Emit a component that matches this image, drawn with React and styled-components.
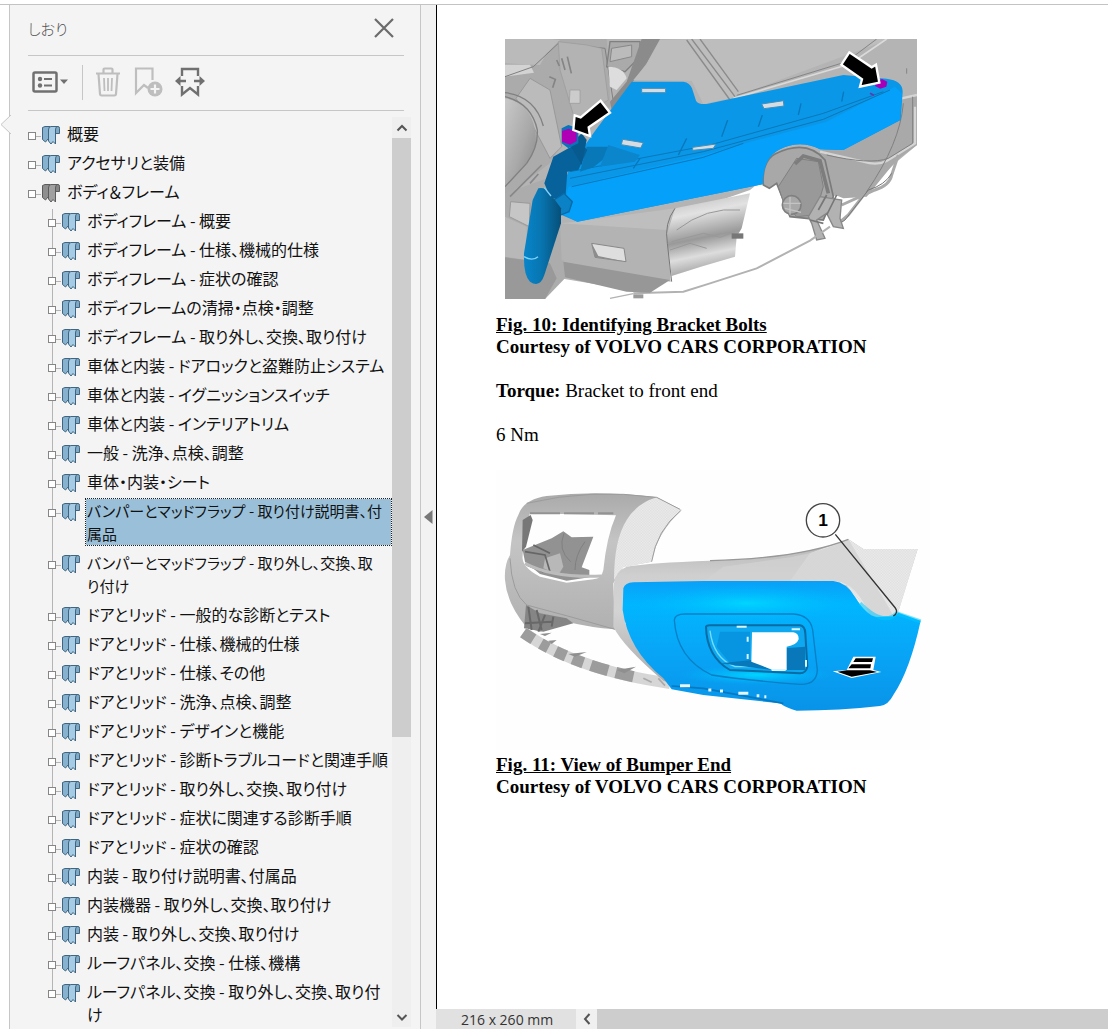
import React from "react";
import styled, { createGlobalStyle, css } from "styled-components";

const GlobalStyle = createGlobalStyle`
  * { box-sizing: border-box; }
  body { margin: 0; background: #fff; }
  button { border: 0; padding: 0; background: none; font: inherit; color: inherit; cursor: pointer; }
  ul { list-style: none; margin: 0; padding: 0; }
`;

const uiFont = css`
  font-family: "Noto Sans CJK JP", "Noto Sans", sans-serif;
  font-feature-settings: "palt";
`;

const Shell = styled.div`
  display: flex;
  flex-direction: column;
  height: 100vh;
  overflow: hidden;
`;
const TopEdge = styled.div`
  flex: none;
  height: 5px;
  border-bottom: 1px solid #c3c3c3;
`;
const Workspace = styled.div`
  display: flex;
  flex: 1;
  min-height: 0;
`;
const Rail = styled.div`
  flex: none;
  width: 10px;
  padding-top: 110px;
  svg { display: block; position: relative; z-index: 1; }
`;
const Panel = styled.aside`
  ${uiFont}
  flex: none;
  width: 412px;
  display: flex;
  flex-direction: column;
  background: #f4f4f4;
  border-left: 1px solid #c6c6c6;
  border-right: 1px solid #c6c6c6;
  margin-left: -1px;
`;
const PanelHeader = styled.header`
  display: flex;
  flex: none;
  align-items: center;
  justify-content: space-between;
  height: 51px;
  margin: 0 16px 0 18px;
  padding: 0 9px 4px 0;
  border-bottom: 1px solid #c6c6c6;
`;
const PanelTitle = styled.h1`
  margin: 0;
  font-size: 15px;
  font-weight: 300;
  color: #555;
`;
const IconButton = styled.button`
  display: flex;
  flex: none;
`;
const Toolbar = styled.div`
  display: flex;
  flex: none;
  align-items: center;
  gap: 12px;
  height: 55px;
  margin: 0 16px 0 18px;
  padding: 0 0 2px 4px;
  border-bottom: 1px solid #c6c6c6;
`;
const Divider = styled.span`
  width: 1px;
  height: 35px;
  margin-left: 2px;
  background: #c6c6c6;
`;
const TreeArea = styled.div`
  display: flex;
  flex: 1;
  min-height: 0;
  padding: 6px 9px 2px 18px;
`;
const Tree = styled.nav`
  flex: 1;
  min-width: 0;
  padding-top: 5px;
  overflow: hidden;
`;
const Branch = styled.ul`
  padding-left: 20px;
`;
const Row = styled.div`
  display: flex;
  padding-right: 1px;
`;
const Guide = styled.span`
  flex: none;
  width: 13px;
  padding-top: 10px;
  background-image: ${(p) => (p.$line ? "linear-gradient(#b4b4b4, #b4b4b4)" : "none")};
  background-repeat: no-repeat;
  background-position: 4px 0;
  background-size: 1px ${(p) => (p.$last ? "12px" : "100%")};
`;
const Expander = styled.button`
  display: block;
  width: 8px;
  height: 8px;
  border: 1px solid #868686;
  background: #fff;
`;
const Twig = styled.span`
  display: flex;
  align-items: center;
  &::after {
    content: "";
    width: 5px;
    height: 1px;
    background: #b4b4b4;
  }
`;
const Ribbon = styled.span`
  flex: none;
  width: 25px;
  padding-top: 3px;
  svg { display: block; }
`;
const Label = styled.a`
  flex: ${(p) => (p.$long ? "1" : "0 1 auto")};
  min-width: 0;
  margin-bottom: 6px;
  padding-left: 1px;
  font-size: ${(p) => (p.$long ? "15px" : "16px")};
  line-height: 23px;
  color: #111;
  text-decoration: none;
  white-space: pre-line;
  word-break: break-all;
  ${(p) => p.$selected && css`
    background: #9ac0d9;
    outline: 1px dotted #222;
  `}
`;
const VScroll = styled.div`
  display: flex;
  flex: none;
  flex-direction: column;
  width: 19px;
  background: #efefef;
`;
const ScrollButton = styled.button`
  display: flex;
  flex: none;
  align-items: center;
  justify-content: center;
  width: 20px;
  height: 21px;
`;
const VTrack = styled.div`
  flex: 1;
`;
const VThumb = styled.div`
  height: 69%;
  background: #cdcdcd;
`;
const Splitter = styled.div`
  display: flex;
  flex: none;
  align-items: center;
  justify-content: center;
  width: 15px;
  background: #f2f2f2;
`;
const Viewer = styled.main`
  display: flex;
  flex: 1;
  flex-direction: column;
  min-width: 0;
`;
const Page = styled.article`
  flex: 1;
  min-height: 0;
  padding: 34px 0 0 59px;
  overflow: hidden;
  border-left: 1px solid #000;
  background: #fff;
  font-family: "Liberation Serif", serif;
  font-size: 19px;
  line-height: 22px;
  color: #000;
`;
const Figure = styled.figure`
  margin: 0 0 22px;
  svg { display: block; }
`;
const FigureArt = styled.div`
  padding: ${(p) => p.$pad};
`;
const Caption = styled.figcaption`
  font-weight: 700;
`;
const CaptionTitle = styled.div`
  text-decoration: underline;
`;
const Para = styled.p`
  margin: 0 0 22px;
`;
const StatusBar = styled.footer`
  display: flex;
  flex: none;
  height: 20px;
  background: #cdcdcd;
`;
const PageSize = styled.div`
  width: 140px;
  padding-left: 25px;
  background: #e1e1e1;
  font: 14px/22px "Open Sans", sans-serif;
  color: #333;
`;
const HBack = styled(ScrollButton)`
  width: 21px;
  height: 20px;
  background: #f0f0f0;
`;

const Chevron = ({ d }) => (
  <svg width="12" height="12" viewBox="0 0 12 12" fill="none" stroke="#555" strokeWidth="2">
    <path d={d} />
  </svg>
);

const BookmarkIcon = ({ gray }) => {
  const [light, mid, dark, edge] = gray
    ? ["#a0a0a0", "#8f8f8f", "#858585", "#5c5c5c"]
    : ["#a6cbe5", "#86b1cf", "#7fa9c5", "#3f6580"];
  return (
    <svg width="20" height="20" viewBox="0 0 20 20" strokeLinejoin="round">
      <path d="M13 1.500h4q1.500 0 1.500 1.800v5.200H14z" fill={dark} stroke={edge} />
      <path d="M1.500 2.500L4 1.500h5v15l-2-2.500-2.500 3-3-2.500z" fill={mid} stroke={edge} />
      <path d="M7.500 5q0-3.500 2.500-3.500h6Q14.500 2.500 14.500 5V19l-2.500-2.500L10 19l-2.500-3z" fill={light} stroke={edge} />
    </svg>
  );
};

const OptionsIcon = () => (
  <svg width="36" height="24" viewBox="0 0 36 24" fill="none" stroke="#707070">
    <rect x="1.500" y="2.500" width="23" height="19" rx="1.500" strokeWidth="2.500" />
    <circle cx="8" cy="9" r="2.200" fill="#707070" stroke="none" />
    <circle cx="8" cy="15.500" r="2.200" fill="#707070" stroke="none" />
    <path d="M12 9h8M12 15.500h8" strokeWidth="2.200" />
    <path d="M28 9.500h8l-4 4.500z" fill="#707070" stroke="none" />
  </svg>
);
const TrashIcon = () => (
  <svg width="26" height="30" viewBox="0 0 26 30" fill="none" stroke="#bebebe" strokeWidth="2.200">
    <path d="M1 6.500h24M8.500 6V2.500q0-1 1-1h7q1 0 1 1V6M3.500 7l1.500 20q.2 1.500 1.500 1.500h13q1.300 0 1.500-1.500l1.500-20" />
    <path d="M9 11l.5 13M13 11v13M17 11l-.5 13" strokeWidth="1.800" />
  </svg>
);
const AddBookmarkIcon = () => (
  <svg width="30" height="30" viewBox="0 0 30 30" fill="none" stroke="#bebebe" strokeWidth="2.200">
    <path d="M15 21l-4-3-8 8V1.500h16.500V13" />
    <circle cx="22" cy="22" r="7.500" fill="#bebebe" stroke="none" />
    <path d="M22 17.500v9M17.500 22h9" stroke="#f4f4f4" />
  </svg>
);
const ExpandIcon = () => (
  <svg width="30" height="30" viewBox="0 0 30 30" fill="none" stroke="#707070" strokeWidth="2.400">
    <path d="M7 9V2h16v7M7 19v8.500l8-6.500 8 6.500V19" />
    <path d="M2 14h9M28 14h-9" />
    <path d="M0 14l5.500-5v10zM30 14l-5.500-5v10z" fill="#707070" stroke="none" />
  </svg>
);

/* Front-end bracket with its two bolts */
const BracketDrawing = () => (
  <svg width="412" height="260" viewBox="45 27 1236 780" preserveAspectRatio="none" role="img" aria-label="Bracket bolts">
    <defs>
      <linearGradient id="duct" x1="0" y1="0" x2="1" y2="1">
        <stop offset="0" stopColor="#c9c9c9" /><stop offset=".55" stopColor="#a9a9a9" /><stop offset="1" stopColor="#858585" />
      </linearGradient>
      <linearGradient id="tube" x1="0" y1="0" x2=".2" y2="1">
        <stop offset="0" stopColor="#b5b5b5" /><stop offset=".3" stopColor="#e2e2e2" /><stop offset=".6" stopColor="#999" /><stop offset=".8" stopColor="#ddd" /><stop offset="1" stopColor="#a5a5a5" />
      </linearGradient>
      <linearGradient id="flap" x1="0" y1="0" x2="1" y2="0">
        <stop offset="0" stopColor="#0785c9" /><stop offset=".45" stopColor="#0876b2" /><stop offset="1" stopColor="#064f79" />
      </linearGradient>
    </defs>
    <path d="M45 27H1281V345L1215 400 1130 480 1020 500 830 440 780 480 550 560 530 740 480 790 210 745 165 807H45z" fill="#b4b4b4" />
    <path d="M45 27H350L362 230 240 300 180 400 45 500z" fill="#ababab" />
    <path d="M45 27H180L210 30 170 70 150 105 45 100z" fill="#bababa" />
    <path d="M45 104H120L132 128 45 140z" fill="#d3d3d3" />
    <path d="M45 140L130 110 205 40 345 55 370 215" fill="none" stroke="#808080" strokeWidth="3" />
    <path d="M78 205L120 145 180 180 215 350 180 385 130 290z" fill="#bbb" stroke="#999" strokeWidth="3" />
    <path d="M45 205Q110 215 130 280T118 390L45 475z" fill="url(#duct)" />
    <path d="M45 200Q125 220 142 300 145 350 110 400L45 470M45 188q90 10 115 100" fill="none" stroke="#808080" strokeWidth="4" />
    <path d="M205 35l85 10 45 10 20 155-100 60-45-150z" fill="#b3b3b3" stroke="#999" strokeWidth="2" />
    <path d="M240 180h30v40h-32z" fill="#ccc" stroke="#999" strokeWidth="2" />
    <path d="M178 140l18 8-8 25M215 85l10 35M232 80l12 50M200 90l8 18" fill="none" stroke="#858585" strokeWidth="5" />
    <path d="M360 35H450V80L405 125 350 110z" fill="#aaa" stroke="#808080" strokeWidth="4" />
    <path d="M365 55l60-10v35l-65 15z" fill="#bbb" stroke="#888" strokeWidth="3" />
    <path d="M355 110q45 0 55 35l-30 35-20-10z" fill="#ddd" />
    <path d="M455 27H510L470 100 365 240 360 215 410 155z" fill="#8b8b8b" />
    <path d="M510 30L590 27H1200L720 205 640 222 605 152 430 150 468 105z" fill="#bdbdbd" />
    <path d="M590 30L720 210M605 27L735 200M630 27L745 185" stroke="#8b8b8b" strokeWidth="4" />
    <path d="M730 205L1080 102 1190 27" fill="none" stroke="#dadada" strokeWidth="5" />
    <path d="M740 196L1070 95 1160 27M1250 115v16" fill="none" stroke="#858585" strokeWidth="3" />
    <path d="M1235 205L1281 195V345L1220 390 1130 500 1060 505 1000 480 985 370z" fill="#a9a9a9" />
    <path d="M1235 205L1281 195M1275 230V340L1190 393Q1160 408 1120 395L990 365" fill="none" stroke="#d5d5d5" strokeWidth="7" />
    <path d="M1268 200V340L1195 385Q1140 405 1010 375M1240 220q-10 120-110 265" fill="none" stroke="#808080" strokeWidth="3" />
    <path d="M1225 375l-20 60q-5 30-50 45l-100 45M1125 490l-50 65-35 30-15-15" fill="none" stroke="#aaa" strokeWidth="9" />
    <path d="M1205 430q-20 35-70 50l-70 90-30 20" fill="none" stroke="#777" strokeWidth="3" />
    <path d="M820 465Q815 395 855 372 950 325 1005 390L1030 500 1000 570 900 560 860 460 838 475z" fill="#a8a8a8" stroke="#7b7b7b" strokeWidth="5" />
    <path d="M865 470L920 385 985 395 1000 470 975 555 920 560 880 515z" fill="#999" stroke="#808080" strokeWidth="3" />
    <path d="M915 402L940 378 990 392 1015 490" fill="none" stroke="#7d7d7d" strokeWidth="11" />
    <circle cx="905" cy="525" r="28" fill="#a8a8a8" stroke="#808080" strokeWidth="5" />
    <path d="M880 520h52M885 535l48 12M900 500v54" stroke="#c4c4c4" strokeWidth="4" />
    <path d="M990 500l65 10-5 55 10 30-30-5-20-40-30 20 25 55-25 5-15-50-10-20z" fill="#b2b2b2" stroke="#888" strokeWidth="4" />
    <path d="M985 540l25-45M1010 555l30-60M960 570l40 10" stroke="#777" strokeWidth="5" />
    <path d="M430 790L580 785 660 760 800 715 960 632 1020 590" fill="none" stroke="#b2b2b2" strokeWidth="6" />
    <path d="M360 805l70-14" stroke="#b2b2b2" strokeWidth="4" />
    <path d="M430 793h30v12h-30z" fill="#999" />
    <path d="M45 490L185 440 215 605 225 745 165 807H45z" fill="#acacac" />
    <path d="M62 515L120 520 118 590 58 560z" fill="#c6c6c6" stroke="#999" strokeWidth="3" />
    <path d="M45 560L110 590V690L45 680z" fill="#b8b8b8" />
    <path d="M45 682L180 700 200 745 165 807H45z" fill="#999" />
    <path d="M155 405L60 500M120 460l25-28" fill="none" stroke="#888" strokeWidth="5" />
    <path d="M210 570H555L535 620 542 755 485 745 215 690z" fill="#b3b3b3" />
    <path d="M220 695L540 750 480 788 410 785 225 742z" fill="#979797" />
    <path d="M260 575L555 535 530 600 210 580z" fill="#bebebe" />
    <path d="M305 640L402 655 408 695 315 682z" fill="#dedede" stroke="#888" strokeWidth="3" />
    <path d="M305 640L325 678 408 695 315 682z" fill="#8c8c8c" />
    <path d="M555 535L780 490 755 595 740 620 735 680 640 708 545 738 530 615z" fill="url(#tube)" />
    <path d="M545 635L640 610 690 622 735 605M540 660L600 640 650 655M560 600q90-70 190-60" fill="none" stroke="#999" strokeWidth="3" />
    <path d="M725 610h35v16h-35z" fill="#777" />
    <path d="M555 535Q522 580 532 640L545 755" fill="none" stroke="#777" strokeWidth="3" />

    <path d="M425 155H580Q600 158 606 175L618 212Q624 224 650 222L1060 135 1190 146Q1238 152 1238 185L1232 270 1060 360 990 358Q930 328 870 358 820 380 818 463L262 575 215 555 205 510 240 410 310 310z" fill="#0b97e8" />
    <path d="M235 470L640 375 790 333 1010 275 1215 170 1236 190 1230 270 1060 360 990 358Q930 328 870 358 820 380 818 463L262 575 218 552z" fill="#05a0fa" />
    <path d="M240 425L450 385 660 345 1000 250 1180 185M240 445L640 365 1000 268 1200 180M245 470L640 382 760 340" fill="none" stroke="#0878ba" strokeWidth="3" />
    <path d="M565 375l25-50M695 320l18-50M805 290l12-35M925 255l8-35M1055 215l6-30M430 415l20-30" stroke="#0878bc" strokeWidth="4" />
    <path d="M270 425L290 350 355 350 350 380 310 412z" fill="#0978b8" />
    <path d="M355 345L450 375 435 395 330 410z" fill="#0b86cd" />
    <path d="M190 380L270 335 292 360 265 420 232 425 225 520 180 500 163 460z" fill="#07629b" />
    <path d="M240 345l35-35 15 20-15 75" fill="#075a8d" />
    <path d="M192 510l30-20 25 25-10 30-25 10z" fill="#0c82c6" stroke="#056ba7" strokeWidth="4" />
    <path d="M145 475Q165 470 180 490L213 535V580L163 735Q150 775 120 755 100 735 102 670L128 510z" fill="url(#flap)" />
    <path d="M102 680q25 15 42 0M163 473l20 25" fill="none" stroke="#7ed3ff" strokeWidth="4" />
    <g fill="#d5dde2" stroke="#438fb9" strokeWidth="3">
      <path d="M455 175h72v13h-72z" /><path d="M398 328l62 10-8 16-58-10z" />
      <path d="M608 352l70-10-8 13-62 6z" /><path d="M815 222l65-10 2 16-60 8z" />
    </g>
    <path d="M215 295l20-10 30 10v45l-30 15-20-15z" fill="#0875ba" />
    <path d="M216 303l20-7 24 10v28l-20 10-24-9z" fill="#b000b5" />
    <path d="M1158 155l18-8 16 8-3 15-18 6-16-8z" fill="#a500b6" />
    <path d="M1140 190l12 6" stroke="#6a34b0" strokeWidth="5" />
    <path d="M332 212L360 248 296 292 300 318 250 300 254 256 272 262z" fill="#000" stroke="#fff" strokeWidth="7" />
    <path d="M1078 67L1054 104 1116 148 1110 170 1168 158 1158 104 1145 112z" fill="#000" stroke="#fff" strokeWidth="7" />
  </svg>
);

/* Bumper cover end with callout 1 */
const BumperDrawing = () => (
  <svg width="434" height="280" viewBox="18 0 1302 840" role="img" aria-label="Bumper end">
    <defs>
      <linearGradient id="cover" x1="0" y1="0" x2="0" y2="1">
        <stop offset="0" stopColor="#aaa" /><stop offset=".35" stopColor="#c4c4c4" /><stop offset="1" stopColor="#b0b0b0" />
      </linearGradient>
      <linearGradient id="shoulder" x1="0" y1="0" x2="0" y2="1">
        <stop offset="0" stopColor="#b5b5b5" /><stop offset=".25" stopColor="#cfcfcf" /><stop offset=".5" stopColor="#d3d3d3" /><stop offset="1" stopColor="#aaa" />
      </linearGradient>
      <linearGradient id="skin" x1="0" y1="0" x2="0" y2="1">
        <stop offset="0" stopColor="#0aa0f8" /><stop offset=".18" stopColor="#00b6ff" /><stop offset=".5" stopColor="#08a7f8" /><stop offset="1" stopColor="#0893e8" />
      </linearGradient>
      <radialGradient id="glow">
        <stop offset="0" stopColor="#00d5ff" /><stop offset="1" stopColor="#00b6ff" stopOpacity="0" />
      </radialGradient>
      <pattern id="mesh" width="8" height="8" patternUnits="userSpaceOnUse">
        <rect width="8" height="8" fill="#ededed" /><path d="M0 0h4v4H0zM4 4h4v4H4z" fill="#ddd" />
      </pattern>
    </defs>
    <rect x="18" width="1302" height="840" fill="#fefefe" />
    <path d="M85 135Q100 88 170 78 330 60 500 82L575 120Q500 190 485 275L400 290 370 340 375 478Q300 472 230 455L150 485 108 470Q50 400 45 330 42 285 60 255 66 170 85 135z" fill="url(#cover)" />
    <path d="M500 82L575 120Q495 190 485 275L400 292 372 330Q372 210 410 150 440 100 500 82z" fill="url(#mesh)" />
    <path d="M110 100Q300 55 500 82L570 118M485 275Q500 180 572 122M60 265Q65 370 110 405L240 440 375 478" fill="none" stroke="#9c9c9c" strokeWidth="3" />
    <path d="M120 130L378 136Q350 200 340 300 335 326 310 328L230 338 150 320Q92 290 98 255L103 180z" fill="#fefefe" />
    <path d="M98 150L122 135 128 150 108 230 96 245z" fill="#777" />
    <path d="M98 240L185 205 220 184 245 202 310 200 275 292 298 300V322L230 332 150 312 105 275z" fill="#929292" />
    <path d="M165 265l45-15 10 40-15 25-45-20z" fill="#b8b8b8" />
    <path d="M222 190q-20 50 20 85M285 215q-30 40-30 85" fill="none" stroke="#808080" strokeWidth="3" />
    <path d="M105 245l60 10 15 50M130 225l50 25M110 285l50 20" fill="none" stroke="#666" strokeWidth="5" />
    <path d="M105 280Q190 325 335 318" fill="none" stroke="#bcbcbc" strokeWidth="9" />
    <path d="M120 130H370" stroke="#929292" strokeWidth="6" strokeDasharray="90 12" />
    <path d="M108 405L150 430 230 445 250 460 160 485 102 475z" fill="#858585" />
    <path d="M115 410l10 70M140 420l15 60M165 435l-20 50M190 440l-5 30M105 460l80-5" stroke="#686868" strokeWidth="6" />
    <path d="M100 488Q190 550 300 585 400 620 540 640" fill="none" stroke="#d6d6d6" strokeWidth="34" />
    <path d="M100 488Q190 550 300 585 360 605 430 620" fill="none" stroke="#9c9c9c" strokeWidth="34" strokeDasharray="36 26 26 24 34 22 34 24 54 24 60 80" />
    <path d="M150 492l35-4-20 10zM175 512l25-2-15 12zM235 552l55-6-35 14zM380 600l58-10-35 20z" fill="#8f8f8f" />
    <path d="M460 625l25 12M505 625l20 22" stroke="#aaa" strokeWidth="5" />
    <path d="M372 340Q375 305 410 290 480 278 660 272 930 265 1075 208L1120 237H1283L1225 425 1210 440 1070 360 415 350 405 460 540 640 520 632Q400 530 370 470z" fill="url(#shoulder)" />
    <path d="M1075 208L1120 237H1283L1225 425 1210 440H1140L1070 345 900 332 960 250z" fill="url(#mesh)" />
    <path d="M900 262Q1000 245 1075 208L1195 410 1210 438H1140Q1100 340 1040 334H640L700 290z" fill="#d2d2d2" opacity=".75" />
    <path d="M660 272Q930 265 1075 208" fill="none" stroke="#989898" strokeWidth="4" />
    <path d="M400 355Q405 338 430 337L640 333H1030Q1070 338 1095 380 1130 437 1160 440L1210 439 1225 428 1292 452Q1260 600 1210 675 1195 705 1170 708 1050 722 920 722 890 715 870 700L640 675 545 658 520 625Q415 540 398 420z" fill="url(#skin)" />
    <ellipse cx="770" cy="400" rx="330" ry="55" fill="url(#glow)" />
    <ellipse cx="800" cy="615" rx="230" ry="30" fill="url(#glow)" />
    <path d="M1110 400q70 70 110 30l72 24" fill="none" stroke="#00c8ff" strokeWidth="12" opacity=".55" />
    <path d="M553 450Q555 432 585 432H910Q960 435 968 480L982 600Q980 645 930 643 760 630 665 615 560 565 553 450z" fill="none" stroke="#087fc5" strokeWidth="4" />
    <path d="M648 470Q650 465 665 466H930Q945 468 946 490L952 590Q948 610 930 610L720 600Q650 560 648 470z" fill="#0da8ef" stroke="#076ca4" strokeWidth="6" />
    <path d="M660 482Q670 565 735 590H925" fill="none" stroke="#75dcff" strokeWidth="4" />
    <path d="M690 485H780V575L720 580 680 530z" fill="#0795e1" />
    <path d="M690 580L785 570 845 600zM885 535L945 530V600H880z" fill="#0878bb" />
    <path d="M786 487H910Q927 490 926 508 920 526 890 530V600H848L784 575z" fill="#fff" />
    <path d="M740 470h30M905 478h25M845 600h42M948 570v20M773 500v15M773 552v15" stroke="#d8f5ff" strokeWidth="6" />
    <path d="M545 648L640 655 880 700" fill="none" stroke="#0678c0" strokeWidth="5" />
    <path d="M570 647h30M655 660h9M690 663h9M745 670h30M800 677h8M823 680h6" stroke="#e4f6ff" strokeWidth="9" />
    <path d="M1090 560H1157L1150 600 1174 606 1085 624 1028 604 1070 600z" fill="#fff" />
    <path d="M1097 565h52l-3 11h-56zM1085 583h58l-2 12h-66zM1042 605l28-4h70l22 5-77 14z" fill="#000" />
    <path d="M1036 193L1216 414Q1226 428 1210 438" fill="none" stroke="#333" strokeWidth="4" />
    <circle cx="999" cy="151" r="50" fill="#fff" stroke="#444" strokeWidth="4" />
    <text x="999" y="169" textAnchor="middle" fontFamily="Liberation Sans, sans-serif" fontSize="52" fontWeight="700">1</text>
  </svg>
);

const chapters = ["概要", "アクセサリと装備", "ボディ＆フレーム"];
const sections = [
  "ボディフレーム - 概要",
  "ボディフレーム - 仕様、機械的仕様",
  "ボディフレーム - 症状の確認",
  "ボディフレームの清掃・点検・調整",
  "ボディフレーム - 取り外し、交換、取り付け",
  "車体と内装 - ドアロックと盗難防止システム",
  "車体と内装 - イグニッションスイッチ",
  "車体と内装 - インテリアトリム",
  "一般 - 洗浄、点検、調整",
  "車体・内装・シート",
  "バンパーとマッドフラップ - 取り付け説明書、付\n属品",
  "バンパーとマッドフラップ - 取り外し、交換、取\nり付け",
  "ドアとリッド - 一般的な診断とテスト",
  "ドアとリッド - 仕様、機械的仕様",
  "ドアとリッド - 仕様、その他",
  "ドアとリッド - 洗浄、点検、調整",
  "ドアとリッド - デザインと機能",
  "ドアとリッド - 診断トラブルコードと関連手順",
  "ドアとリッド - 取り外し、交換、取り付け",
  "ドアとリッド - 症状に関連する診断手順",
  "ドアとリッド - 症状の確認",
  "内装 - 取り付け説明書、付属品",
  "内装機器 - 取り外し、交換、取り付け",
  "内装 - 取り外し、交換、取り付け",
  "ルーフパネル、交換 - 仕様、機構",
  "ルーフパネル、交換 - 取り外し、交換、取り付\nけ",
];

const Entry = ({ text, line, last, selected, gray }) => (
  <Row>
    <Guide $line={line} $last={last}>
      <Twig><Expander type="button" aria-label={text} /></Twig>
    </Guide>
    <Ribbon><BookmarkIcon gray={gray} /></Ribbon>
    <Label href="#" $selected={selected} $long={text.startsWith("バンパー")}>{text}</Label>
  </Row>
);

export default function App() {
  return (
    <Shell>
      <GlobalStyle />
      <TopEdge />
      <Workspace>
        <Rail>
          <svg width="11" height="19" viewBox="0 0 11 19">
            <path d="M11 0L1 9.500 11 19" fill="#f4f4f4" stroke="#c6c6c6" />
          </svg>
        </Rail>
        <Panel>
          <PanelHeader>
            <PanelTitle>しおり</PanelTitle>
            <IconButton type="button" aria-label="閉じる">
              <svg width="22" height="22" viewBox="0 0 22 22" stroke="#6b6b6b" strokeWidth="2.200">
                <path d="M2 2l18 18M20 2L2 20" />
              </svg>
            </IconButton>
          </PanelHeader>
          <Toolbar>
            <IconButton type="button" aria-label="オプション"><OptionsIcon /></IconButton>
            <Divider />
            <IconButton type="button" aria-label="削除"><TrashIcon /></IconButton>
            <IconButton type="button" aria-label="追加"><AddBookmarkIcon /></IconButton>
            <IconButton type="button" aria-label="展開"><ExpandIcon /></IconButton>
          </Toolbar>
          <TreeArea>
            <Tree aria-label="しおり">
              <ul>
                {chapters.map((c, i) => (
                  <li key={c}>
                    <Entry text={c} gray={i === 2} />
                    {i === 2 && (
                      <Branch>
                        {sections.map((s, n) => (
                          <li key={s}>
                            <Entry text={s} line last={n === sections.length - 1} selected={n === 10} />
                          </li>
                        ))}
                      </Branch>
                    )}
                  </li>
                ))}
              </ul>
            </Tree>
            <VScroll>
              <ScrollButton type="button" aria-label="上へ"><Chevron d="M1.500 8.500L6 4l4.500 4.500" /></ScrollButton>
              <VTrack><VThumb /></VTrack>
              <ScrollButton type="button" aria-label="下へ"><Chevron d="M1.500 4L6 8.500 10.500 4" /></ScrollButton>
            </VScroll>
          </TreeArea>
        </Panel>
        <Splitter>
          <IconButton type="button" aria-label="パネルを隠す">
            <svg width="9" height="14" viewBox="0 0 9 14"><path d="M8.500 0v14L0 7z" fill="#777" /></svg>
          </IconButton>
        </Splitter>
        <Viewer>
          <Page>
            <Figure>
              <FigureArt $pad="0 0 15px 9px"><BracketDrawing /></FigureArt>
              <Caption>
                <CaptionTitle>Fig. 10: Identifying Bracket Bolts</CaptionTitle>
                Courtesy of VOLVO CARS CORPORATION
              </Caption>
            </Figure>
            <Para><b>Torque:</b> Bracket to front end</Para>
            <Para>6 Nm</Para>
            <Figure>
              <FigureArt $pad="2px 0 4px 0"><BumperDrawing /></FigureArt>
              <Caption>
                <CaptionTitle>Fig. 11: View of Bumper End</CaptionTitle>
                Courtesy of VOLVO CARS CORPORATION
              </Caption>
            </Figure>
          </Page>
          <StatusBar>
            <PageSize>216 x 260 mm</PageSize>
            <HBack type="button" aria-label="左へ"><Chevron d="M8.500 1L4 6l4.500 5" /></HBack>
          </StatusBar>
        </Viewer>
      </Workspace>
    </Shell>
  );
}
